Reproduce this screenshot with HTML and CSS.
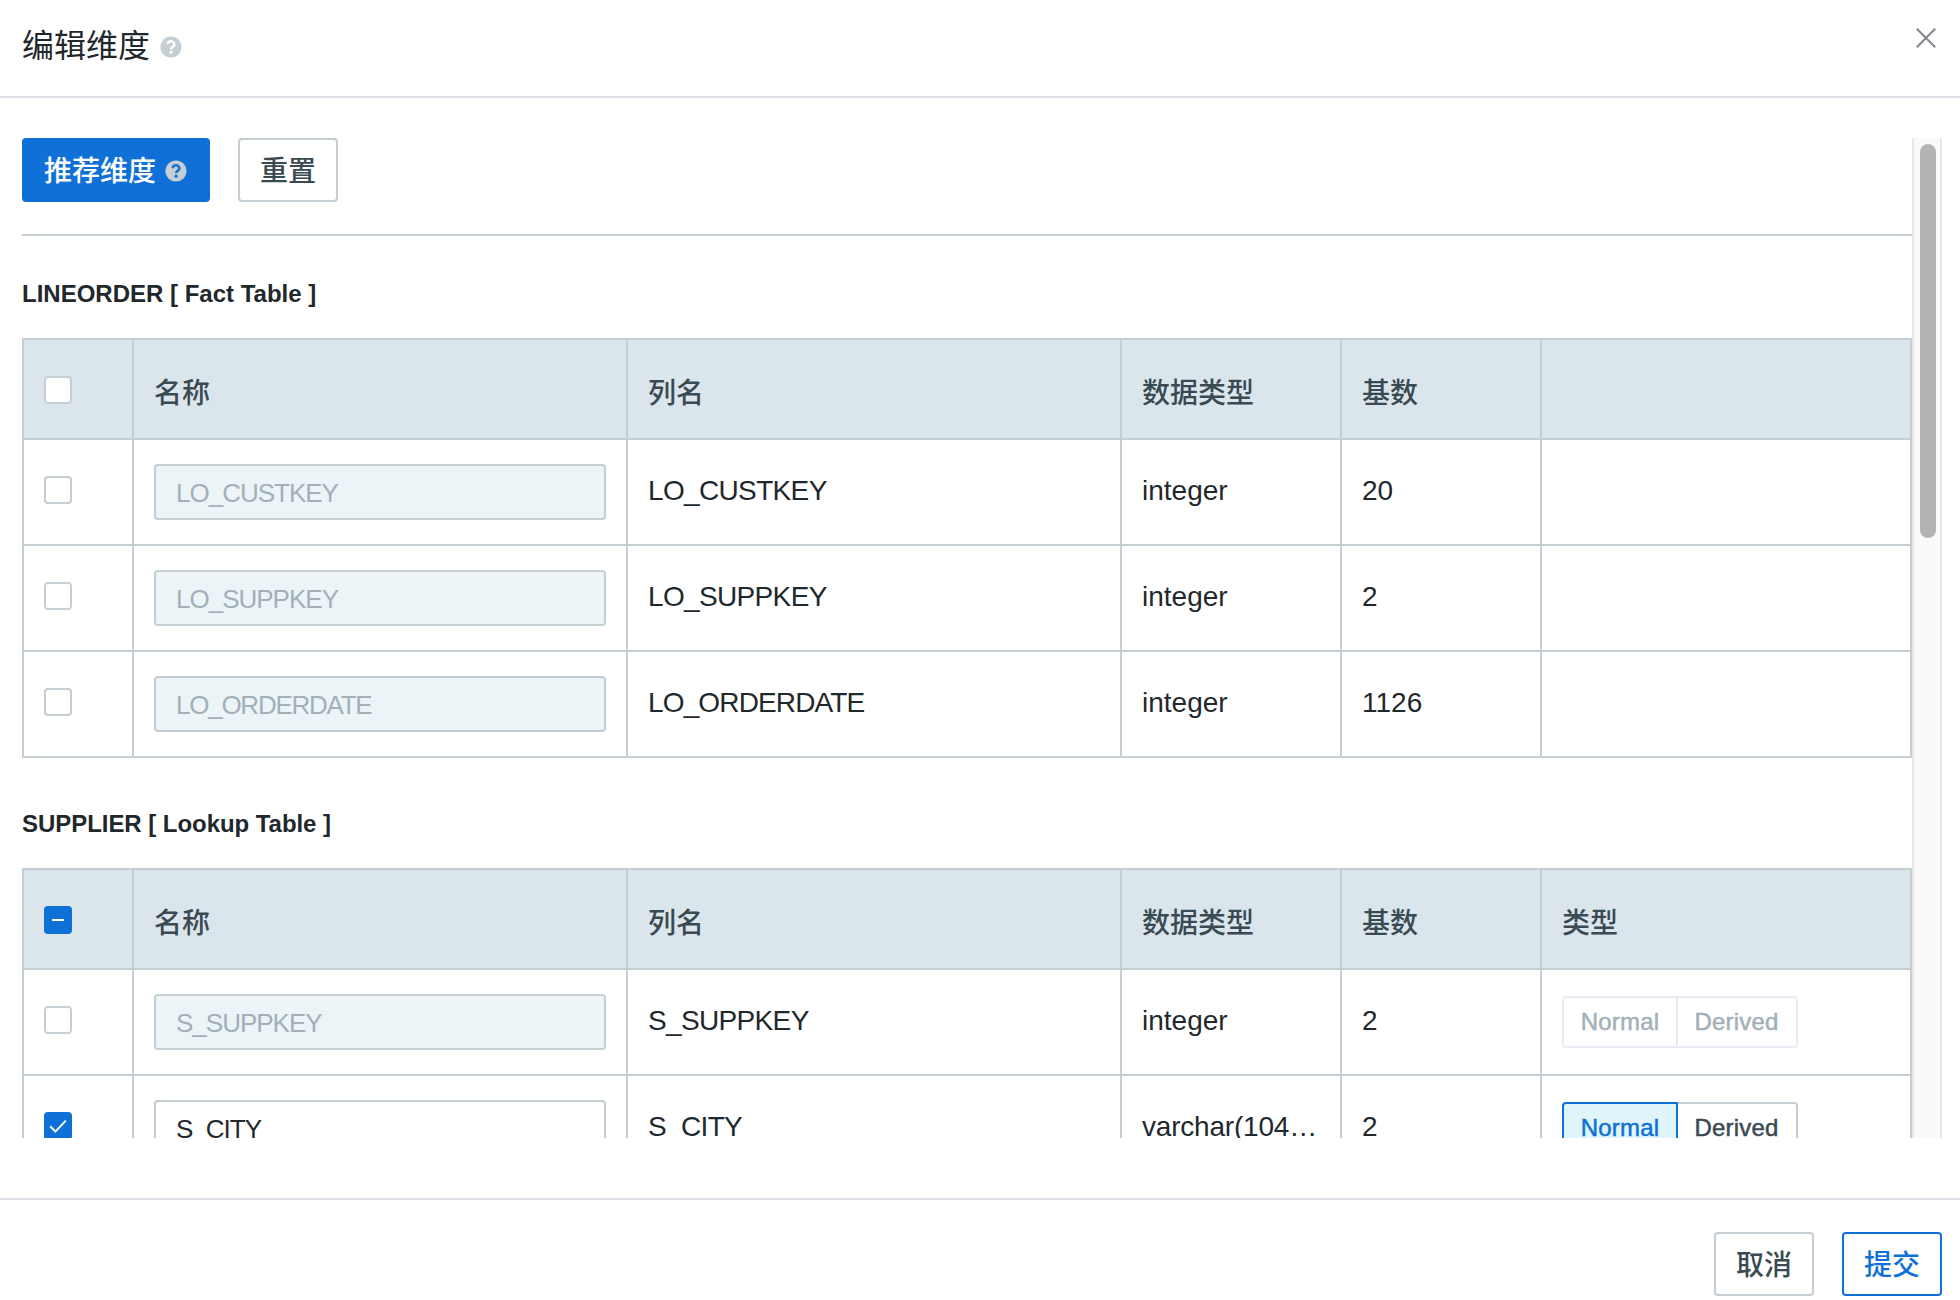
FILE: index.html
```html
<!DOCTYPE html>
<html lang="zh-CN">
<head>
<meta charset="utf-8">
<title>编辑维度</title>
<link rel="stylesheet" href="styles.css">
</head>
<body>
<svg class="defs" aria-hidden="true">
  <symbol id="help" viewBox="0 0 22 22">
    <circle class="help-disc" cx="11" cy="11" r="10.6"/>
    <path class="help-mark" d="M7.7 8.3a3.3 3 0 1 1 5 2.5c-1.1.7-1.6 1.1-1.6 2.4"/>
    <circle class="help-dot" cx="11.1" cy="16.2" r="1.6"/>
  </symbol>
</svg>
<div class="dialog">
  <header class="dialog-header">
    <h1 class="title">编辑维度</h1>
    <svg class="help help-title"><use href="#help"/></svg>
    <svg class="close" viewBox="0 0 20 20"><path d="M.8.8l18.4 18.4M19.2.8L.8 19.2"/></svg>
  </header>

  <main class="dialog-body">
    <div class="content">
      <div class="toolbar">
        <button class="btn btn-primary">推荐维度<svg class="help help-primary"><use href="#help"/></svg></button>
        <button class="btn">重置</button>
      </div>

      <section class="group">
        <h2 class="group-title">LINEORDER [ Fact Table ]</h2>
        <div class="table">
          <div class="row head">
            <div class="cell"><span class="check"></span></div>
            <div class="cell">名称</div>
            <div class="cell">列名</div>
            <div class="cell">数据类型</div>
            <div class="cell">基数</div>
            <div class="cell"></div>
          </div>
          <div class="row">
            <div class="cell select"><span class="check"></span></div>
            <div class="cell field"><div class="input disabled">LO_CUSTKEY</div></div>
            <div class="cell column">LO_CUSTKEY</div>
            <div class="cell">integer</div>
            <div class="cell">20</div>
            <div class="cell"></div>
          </div>
          <div class="row">
            <div class="cell select"><span class="check"></span></div>
            <div class="cell field"><div class="input disabled">LO_SUPPKEY</div></div>
            <div class="cell column">LO_SUPPKEY</div>
            <div class="cell">integer</div>
            <div class="cell">2</div>
            <div class="cell"></div>
          </div>
          <div class="row">
            <div class="cell select"><span class="check"></span></div>
            <div class="cell field"><div class="input disabled tight">LO_ORDERDATE</div></div>
            <div class="cell column tight">LO_ORDERDATE</div>
            <div class="cell">integer</div>
            <div class="cell">1126</div>
            <div class="cell"></div>
          </div>
        </div>
      </section>

      <section class="group">
        <h2 class="group-title lookup">SUPPLIER [ Lookup Table ]</h2>
        <div class="table">
          <div class="row head">
            <div class="cell"><span class="check on"><svg viewBox="0 0 28 28"><path d="M8 14h12"/></svg></span></div>
            <div class="cell">名称</div>
            <div class="cell">列名</div>
            <div class="cell">数据类型</div>
            <div class="cell">基数</div>
            <div class="cell">类型</div>
          </div>
          <div class="row">
            <div class="cell select"><span class="check"></span></div>
            <div class="cell field"><div class="input disabled">S_SUPPKEY</div></div>
            <div class="cell column">S_SUPPKEY</div>
            <div class="cell">integer</div>
            <div class="cell">2</div>
            <div class="cell field"><div class="radio disabled"><span class="option first">Normal</span><span class="option">Derived</span></div></div>
          </div>
          <div class="row">
            <div class="cell select"><span class="check on"><svg viewBox="0 0 28 28"><path d="M6.2 14.2l5.2 5.4L21.8 8.6"/></svg></span></div>
            <div class="cell field"><div class="input">S_CITY</div></div>
            <div class="cell column">S_CITY</div>
            <div class="cell type">varchar(104…</div>
            <div class="cell">2</div>
            <div class="cell field"><div class="radio"><span class="option first active">Normal</span><span class="option">Derived</span></div></div>
          </div>
        </div>
      </section>
    </div>
    <div class="scrollbar"><div class="thumb"></div></div>
  </main>

  <footer class="dialog-footer">
    <button class="btn">取消</button>
    <button class="btn btn-outline">提交</button>
  </footer>
</div>
</body>
</html>
```
FILE: styles.css
```css
* { box-sizing: border-box; }

body {
  margin: 0;
  background: #fff;
  color: #1f282c;
  font-family: "Liberation Sans", "Noto Sans CJK SC", sans-serif;
  font-size: 28px;
}

.defs { display: none; }

.dialog {
  display: flex;
  flex-direction: column;
  width: 1960px;
  height: 1300px;
  overflow: hidden;
}

.dialog-header {
  display: flex;
  flex: none;
  align-items: flex-start;
  height: 98px;
  padding: 28px 24px 0 22px;
  border-bottom: 2px solid #dbe1e6;
}

.title {
  margin: 0;
  font-size: 32px;
  font-weight: 400;
  line-height: 36px;
}

.help { width: 22px; height: 22px; flex: none; }
.help-title { margin: 8px 0 0 10px; color: #fff; }
.help-primary { margin-left: 9px; color: #0f71d8; }
.help-disc { fill: #c4ced3; }
.help-mark { fill: none; stroke: currentColor; stroke-width: 2.4; }
.help-dot { fill: currentColor; }

.close {
  width: 20px;
  height: 20px;
  margin-left: auto;
  fill: none;
  stroke: #83868f;
  stroke-width: 2;
}

.dialog-body {
  display: flex;
  flex: none;
  height: 1000px;
  margin: 40px 18px 60px 22px;
  overflow: hidden;
}

.content { width: 1890px; flex: none; }

.toolbar {
  display: flex;
  gap: 28px;
  height: 98px;
  border-bottom: 2px solid #c4ced3;
}

.btn {
  display: flex;
  align-items: center;
  justify-content: center;
  height: 64px;
  padding: 4px 20px 0;
  border: 2px solid #c4ced3;
  border-radius: 4px;
  background: #fff;
  color: #3a4a53;
  font-family: inherit;
  font-size: 28px;
  font-weight: 500;
  line-height: 32px;
  white-space: nowrap;
}

.btn-primary {
  justify-content: flex-start;
  width: 188px;
  border-color: #0f71d8;
  background: #0f71d8;
  color: #fff;
}

.btn-primary .help { margin-top: -2px; }
.btn-outline { border-color: #0f71d8; color: #0f71d8; }

.group { height: 530px; padding-top: 42px; }

.group-title {
  margin: 0 0 28px;
  font-size: 24px;
  font-weight: 700;
  line-height: 32px;
}

.group-title.lookup { letter-spacing: -0.05px; }

.table { border: 2px solid #c4ced3; border-bottom: 0; border-right: 0; }

.row {
  display: grid;
  grid-template-columns: 110px 494px 494px 220px 200px 370px;
  height: 106px;
}

.row.head {
  height: 100px;
  background: #dbe6ec;
  color: #3a4a53;
  font-weight: 500;
}

.cell {
  display: flex;
  align-items: center;
  padding: 0 20px 2px;
  border-right: 2px solid #c4ced3;
  border-bottom: 2px solid #c4ced3;
  white-space: nowrap;
  line-height: 36px;
}

.head .cell { padding: 10px 20px 0; }
.head .cell:first-child { padding-top: 2px; }
.cell.select { padding-bottom: 4px; }
.cell.field { padding-bottom: 0; }
.cell.column { letter-spacing: -0.65px; }
.cell.column.tight { letter-spacing: -0.85px; }
.cell.type { letter-spacing: -0.2px; }

.check {
  width: 28px;
  height: 28px;
  border: 2px solid #c4ced3;
  border-radius: 4px;
  background: #fff;
}

.check.on { border: 0; background: #0f71d8; }

.check svg {
  display: block;
  width: 28px;
  height: 28px;
  fill: none;
  stroke: #fff;
  stroke-width: 2;
}

.input {
  width: 452px;
  height: 56px;
  padding: 2px 20px 0;
  border: 2px solid #c4ced3;
  border-radius: 4px;
  font-size: 26px;
  letter-spacing: -1px;
  line-height: 50px;
}

.input.tight { letter-spacing: -1.25px; }
.input.disabled { background: #ecf4f8; color: #a2b0b8; }

.radio {
  display: flex;
  color: #3a4a53;
  font-size: 24px;
  letter-spacing: 0.2px;
  line-height: 48px;
  -webkit-text-stroke: 0.5px currentColor;
}

.option {
  width: 120px;
  height: 52px;
  padding-right: 1px;
  border: 2px solid #c4ced3;
  border-left: 0;
  border-radius: 0 4px 4px 0;
  text-align: center;
}

.option.first {
  width: 116px;
  padding-right: 0;
  border-left: 2px solid #c4ced3;
  border-radius: 4px 0 0 4px;
}

.option.active { border-color: #0f71d8; background: #e0f5fb; color: #0f71d8; }
.radio.disabled { color: #a2b0b8; }
.radio.disabled .option { border-color: #e6ebf4; }

.scrollbar {
  width: 30px;
  height: 1000px;
  padding: 6px 4px 0 6px;
  border: solid #e8e8e8;
  border-width: 0 2px;
  background: #fafafa;
}

.thumb { width: 16px; height: 394px; border-radius: 8px; background: #b4b4b4; }

.dialog-footer {
  display: flex;
  flex: none;
  justify-content: flex-end;
  gap: 28px;
  height: 102px;
  padding: 32px 18px 0;
  border-top: 2px solid #dbe1e6;
}
```
